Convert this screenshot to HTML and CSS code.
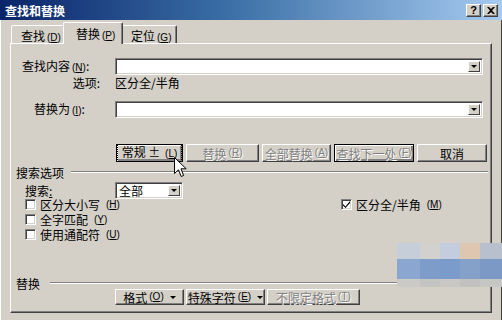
FILE: index.html
```html
<!DOCTYPE html>
<html lang="zh-CN">
<head>
  <meta charset="UTF-8">
  <title>查找和替换</title>
  <link rel="stylesheet" href="styles.css">
</head>
<body>
  <div class="dialog">
    <div class="titlebar">
      <span class="title">查找和替换</span>
      <div class="caption-btns">
        <span class="cap-btn help">?</span>
        <span class="cap-btn">
          <svg width="8" height="7" viewBox="0 0 8 7"><path d="M0 0h2l2 2 2-2h2L5 3.5 8 7H6L4 5 2 7H0l3-3.5z" fill="#000"/></svg>
        </span>
      </div>
    </div>

    <div class="tabs">
      <div class="tab first">查找<span class="key">(<u>D</u>)</span></div>
      <div class="tab active">替换<span class="key">(<u>P</u>)</span></div>
      <div class="tab last">定位<span class="key">(<u>G</u>)</span></div>
    </div>

    <div class="panel">
      <div class="field-row find-row">
        <span class="field-label find-label">查找内容<span class="key">(<u>N</u>)</span>:</span>
        <div class="field combo-wide"><span class="drop-btn"><i class="tri"></i></span></div>
      </div>
      <div class="option-row">
        <span class="field-label opt-label">选项:</span>
        <span>区分全/半角</span>
      </div>
      <div class="field-row replace-row">
        <span class="field-label rep-label">替换为<span class="key">(<u>I</u>)</span>:</span>
        <div class="field combo-wide"><span class="drop-btn"><i class="tri"></i></span></div>
      </div>

      <div class="button-row">
        <span class="btn default w67"><span class="focus-rect">常规 ± <span class="key">(<u>L</u>)</span></span></span>
        <span class="btn disabled w73">替换<span class="key">(<u>R</u>)</span></span>
        <span class="btn disabled w69">全部替换<span class="key">(<u>A</u>)</span></span>
        <span class="btn default disabled w80">查找下一处<span class="key">(<u>F</u>)</span></span>
        <span class="btn w70">取消</span>
      </div>

      <div class="group-head search-head">
        <span>搜索选项</span>
        <span class="group-line"></span>
      </div>

      <div class="search-row">
        <span class="field-label search-label">搜索<u>:</u></span>
        <div class="field select">全部<span class="drop-btn"><i class="tri"></i></span></div>
      </div>

      <div class="checks">
        <div class="check-col">
          <div class="check"><span class="box"></span>区分大小写<span class="key">(<u>H</u>)</span></div>
          <div class="check"><span class="box"></span>全字匹配<span class="key">(<u>Y</u>)</span></div>
          <div class="check"><span class="box"></span>使用通配符<span class="key">(<u>U</u>)</span></div>
        </div>
        <div class="check-col">
          <div class="check"><span class="box">
            <svg width="7" height="7" viewBox="0 0 7 7"><path d="M0 3l2.5 2.5L7 0v2L2.5 7 0 4.5z" fill="#000"/></svg>
          </span>区分全/半角<span class="key">(<u>M</u>)</span></div>
        </div>
      </div>

      <div class="group-head replace-head">
        <span>替换</span>
        <span class="group-line"></span>
      </div>

      <div class="button-row bottom-row">
        <span class="btn w69">格式<span class="key">(<u>O</u>)</span><i class="tri menu-tri"></i></span>
        <span class="btn w79">特殊字符<span class="key">(<u>E</u>)</span><i class="tri menu-tri"></i></span>
        <span class="btn disabled w93">不限定格式<span class="key">(<u>T</u>)</span></span>
      </div>
    </div>

    <!-- blurred patch over the corner -->
    <div class="mosaic">
      <span style="background:#c6ced9"></span><span style="background:#d2d1cd"></span><span style="background:#c3cddd"></span><span style="background:#ddc7b1"></span><span style="background:#b9c0cd"></span>
      <span style="background:#8ba7cf"></span><span style="background:#7e9cc9"></span><span style="background:#7b9bca"></span><span style="background:#86a1c9"></span><span style="background:#7c99c6"></span>
      <span style="background:#cbcac6"></span><span style="background:#c4c4c2"></span><span style="background:#c9c8c4"></span><span style="background:#c2c1bf"></span><span style="background:#c6c6c4"></span>
    </div>

    <svg class="cursor" width="13" height="21" viewBox="0 0 13 21">
      <path d="M0.5 0.5V16.5L4.5 12.8L7.2 19.5L9.6 18.5L7 11.8H12.2Z" fill="#fff" stroke="#000" stroke-width="1"/>
    </svg>
  </div>
</body>
</html>
```

FILE: styles.css
```css
* {
  margin: 0;
  padding: 0;
  box-sizing: border-box;
}

body {
  width: 502px;
  height: 320px;
  overflow: hidden;
  background: #d4d0c8;
  font-family: "Noto Sans CJK SC", "Liberation Sans", sans-serif;
  font-size: 12px;
  line-height: 13px;
  color: #000;
}

u {
  text-decoration: underline;
  text-underline-offset: 1px;
}

.key {
  font-family: "Liberation Sans", sans-serif;
  font-size: 10px;
  line-height: 12px;
  margin-left: 2px;
}

.dialog {
  position: relative;
  width: 502px;
  height: 320px;
  background: #d4d0c8;
  box-shadow: inset 1px 0 #fff, inset -1px 0 #404040;
}

/* title bar */
.titlebar {
  height: 20px;
  display: flex;
  align-items: center;
  justify-content: space-between;
  padding: 0 4px 0 5px;
  background: linear-gradient(to right, #0a246a 0%, #3a6ea5 45%, #a6caf0 100%);
}

.title {
  color: #fff;
  font-weight: bold;
}

.caption-btns {
  display: flex;
  gap: 2px;
}

.cap-btn {
  width: 15px;
  height: 13px;
  display: flex;
  align-items: center;
  justify-content: center;
  background: #d4d0c8;
  border-top: 1px solid #fff;
  border-left: 1px solid #fff;
  border-right: 1px solid #404040;
  border-bottom: 1px solid #404040;
  box-shadow: inset -1px -1px #808080;
}

.cap-btn.help {
  font-family: "Liberation Sans", sans-serif;
  font-weight: bold;
  font-size: 11px;
  line-height: 11px;
}

/* tabs */
.tabs {
  display: flex;
  align-items: flex-end;
  height: 21px;
  margin: 2px 0 0 11px;
}

.tab {
  height: 18px;
  padding: 3px 0 0 9px;
  border-top: 1px solid #fff;
  border-left: 1px solid #fff;
  border-right: 1px solid #404040;
  border-radius: 2px 2px 0 0;
  box-shadow: inset -1px 0 #808080;
}

.tab.first { width: 54px; }
.tab.last { width: 56px; }

.tab.active {
  position: relative;
  z-index: 1;
  width: 60px;
  height: 22px;
  margin: 0 -2px -1px;
  padding: 4px 0 0 12px;
  background: #d4d0c8;
}

/* tab page */
.panel {
  width: 482px;
  height: 270px;
  margin-left: 10px;
  border-top: 1px solid #fff;
  border-left: 1px solid #fff;
  border-right: 1px solid #404040;
  border-bottom: 1px solid #404040;
  box-shadow: inset -1px -1px #808080;
}

.field-row,
.option-row,
.search-row {
  display: flex;
  align-items: center;
}

.field-label {
  width: 104px;
  flex-shrink: 0;
}

.find-row { margin-top: 14px; height: 17px; }
.find-label { padding-left: 11px; }

.option-row { height: 15px; }
.opt-label { text-align: right; padding-right: 15px; }

.replace-row { margin-top: 11px; height: 17px; }
.rep-label { padding-left: 23px; }

.field {
  position: relative;
  height: 17px;
  background: #fff;
  border-top: 1px solid #808080;
  border-left: 1px solid #808080;
  border-right: 1px solid #fff;
  border-bottom: 1px solid #fff;
  box-shadow: inset 1px 1px #404040, inset -1px -1px #d4d0c8;
}

.combo-wide { width: 368px; }

.drop-btn {
  position: absolute;
  top: 2px;
  right: 2px;
  bottom: 2px;
  width: 12px;
  display: flex;
  align-items: center;
  justify-content: center;
  background: #d4d0c8;
  border-top: 1px solid #fff;
  border-left: 1px solid #fff;
  border-right: 1px solid #404040;
  border-bottom: 1px solid #404040;
}

.tri {
  display: block;
  width: 0;
  height: 0;
  border-left: 3px solid transparent;
  border-right: 3px solid transparent;
  border-top: 3px solid #000;
}

/* buttons */
.button-row {
  display: flex;
  gap: 3px;
  margin: 26px 0 0 105px;
  height: 18px;
}

.btn {
  height: 18px;
  display: flex;
  align-items: center;
  justify-content: center;
  background: #d4d0c8;
  border-top: 1px solid #fff;
  border-left: 1px solid #fff;
  border-right: 1px solid #404040;
  border-bottom: 1px solid #404040;
  box-shadow: inset -1px -1px #808080;
  white-space: nowrap;
}

.btn.default {
  border: 1px solid #000;
  box-shadow: inset 1px 1px #fff, inset -2px -2px #808080, inset -1px -1px #404040;
}

.btn.disabled {
  color: #808080;
  text-shadow: 1px 1px #fff;
}

.focus-rect {
  padding: 0 3px;
  line-height: 12px;
  outline: 1px dotted #000;
  outline-offset: 1px;
}

.w67 { width: 67px; }
.w69 { width: 69px; }
.w70 { width: 70px; }
.w73 { width: 73px; }
.w79 { width: 79px; }
.w80 { width: 80px; }
.w93 { width: 93px; }

.menu-tri { margin-left: 6px; }

/* group headers */
.group-head {
  display: flex;
  align-items: center;
  height: 12px;
  padding: 0 3px 0 5px;
}

.group-line {
  flex: 1;
  height: 2px;
  margin-left: 7px;
  border-top: 1px solid #808080;
  border-bottom: 1px solid #fff;
}

.search-head { margin-top: 4px; }
.replace-head { margin-top: 35px; }
.replace-head .group-line { margin-left: 10px; }

.search-row { margin-top: 4px; height: 17px; }
.search-label { padding-left: 14px; line-height: 12px; }

.select {
  width: 68px;
  padding: 1px 0 0 3px;
}

/* checkboxes */
.checks {
  display: flex;
  margin-top: -2px;
}

.check-col:first-child {
  width: 330px;
  padding-left: 14px;
}

.check {
  display: flex;
  align-items: center;
  gap: 4px;
  height: 15px;
  line-height: 12px;
}

.box {
  width: 11px;
  height: 11px;
  display: flex;
  align-items: center;
  justify-content: center;
  background: #fff;
  border-top: 1px solid #808080;
  border-left: 1px solid #808080;
  border-right: 1px solid #fff;
  border-bottom: 1px solid #fff;
  box-shadow: inset 1px 1px #404040, inset -1px -1px #d4d0c8;
}

.bottom-row {
  margin: 0 0 0 104px;
  height: 16px;
  gap: 2px;
}

.bottom-row .btn { height: 16px; }

/* overlays */
.mosaic {
  position: absolute;
  left: 397px;
  top: 243px;
  display: grid;
  grid-template-columns: 23px 20px 20px 20px 22px;
  grid-template-rows: 16px 20px 8px;
}

.cursor {
  position: absolute;
  left: 174px;
  top: 157px;
}
```
